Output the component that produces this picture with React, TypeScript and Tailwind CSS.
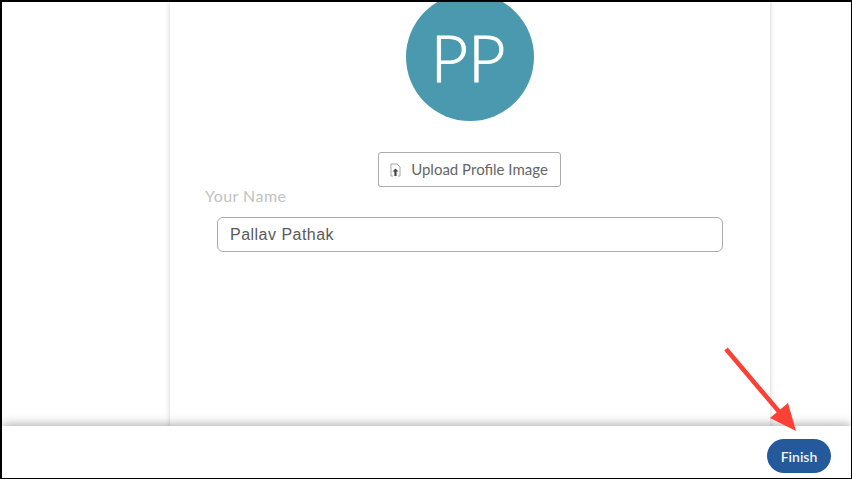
export default function App() {
  return (
    <div className="relative flex h-[479px] w-[852px] flex-col overflow-hidden border-2 border-b border-r border-black bg-white font-['Lato',sans-serif]">
      {/* Scrolled profile card */}
      <div className="flex min-h-0 flex-1 justify-start overflow-hidden pl-[168px]">
        <div className="flex h-[440px] w-[600px] flex-col items-center shadow-[0_0_5px_rgba(0,0,0,0.2)]">
          <div className="mt-[-9px] flex h-[128px] w-[128px] items-center justify-center rounded-full bg-[#4b99ae] pr-[4px] text-[65px] font-light leading-none text-white [-webkit-text-stroke:0.8px_white]">
            PP
          </div>
          <button className="mt-[31px] ml-[-2px] flex h-[35px] w-[183px] items-center justify-center gap-[10px] rounded-[3px] border border-[#ababab] bg-white text-[15px] text-[#666]">
            <svg width="11" height="14" viewBox="0 0 11 14" fill="none">
              <path d="M1 1h6l3 3v9H8M3 13H1V1" stroke="#a5a5a5" strokeWidth="1" />
              <path d="M5.5 5.5 8.5 8.5H6.6V13H4.4V8.5H2.5Z" fill="#444" />
            </svg>
            Upload Profile Image
          </button>
          <div className="mt-[-1px] w-full pl-[35px] text-[16px] leading-[20px] tracking-[0.45px] text-[#c2c2c2]">Your Name</div>
          <div className="mt-[11px] w-full px-[47px]">
            <input
              readOnly
              value="Pallav Pathak"
              className="h-[35px] w-[506px] rounded-[6px] border border-[#ababab] bg-white px-[12px] font-['Liberation_Sans',sans-serif] text-[16px] tracking-[0.48px] text-[#5a5a5a] outline-none"
            />
          </div>
        </div>
      </div>

      {/* Footer bar */}
      <div className="relative z-10 flex h-[52px] shrink-0 items-start justify-end bg-white pr-[20px] pt-[13px] shadow-[0_-1px_10px_rgba(0,0,0,0.36)]">
        <button className="flex h-[34px] w-[64px] items-center justify-center rounded-full bg-[#245a9b] text-[14px] font-semibold text-[#f2f5f9]">
          Finish
        </button>
      </div>

      {/* Annotation arrow */}
      <svg className="absolute left-[-2px] top-[-2px] z-20" width="852" height="479" viewBox="0 0 852 479" fill="none">
        <path d="M726 349 L781 414" stroke="#fb4135" strokeWidth="4.5" />
        <path d="M796 431 L770 418 L788 403 Z" fill="#fb4135" />
      </svg>
    </div>
  )
}
